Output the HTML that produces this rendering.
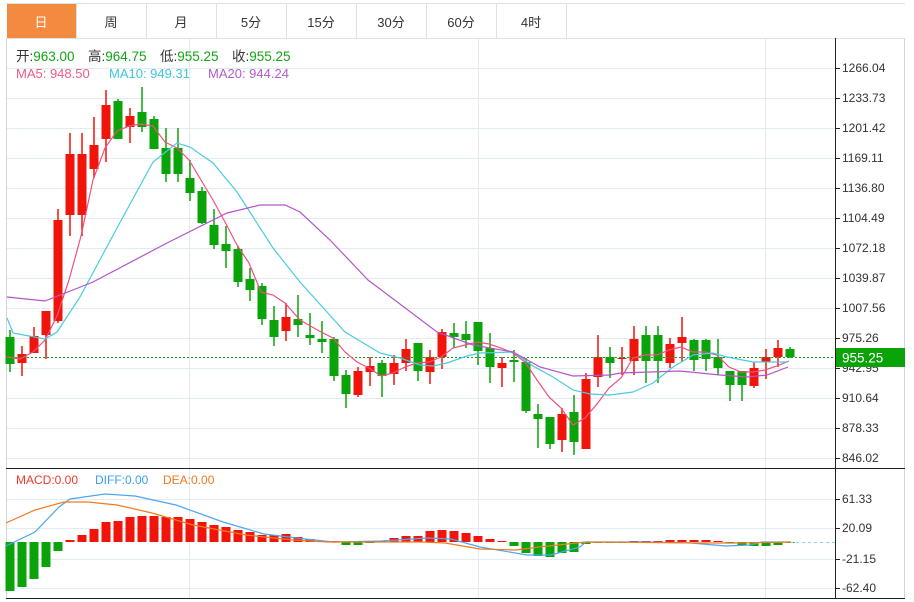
<!DOCTYPE html>
<html><head><meta charset="utf-8"><style>
html,body{margin:0;padding:0;background:#fff;width:914px;height:602px;overflow:hidden}
svg{display:block}
text{font-family:"Liberation Sans","Noto Sans CJK SC",sans-serif}
</style></head><body>
<svg id="s" width="914" height="602" xmlns="http://www.w3.org/2000/svg">
<rect x="0" y="0" width="914" height="602" fill="#fff"/>
<line x1="6" y1="3.5" x2="905" y2="3.5" stroke="#dde2e6"/>
<line x1="6" y1="38.5" x2="905" y2="38.5" stroke="#dde2e6"/>
<rect x="7" y="4" width="69" height="34" fill="#f28a3f"/>
<g stroke="#dde2e6"><line x1="146.5" y1="4" x2="146.5" y2="38"/><line x1="216.5" y1="4" x2="216.5" y2="38"/><line x1="286.5" y1="4" x2="286.5" y2="38"/><line x1="356.5" y1="4" x2="356.5" y2="38"/><line x1="426.5" y1="4" x2="426.5" y2="38"/><line x1="496.5" y1="4" x2="496.5" y2="38"/><line x1="566.5" y1="4" x2="566.5" y2="38"/><line x1="76.5" y1="4" x2="76.5" y2="38"/></g>
<g font-size="13" text-anchor="middle" fill="#333">
<text x="41" y="27" fill="#fff">日</text><text x="111" y="27">周</text><text x="181" y="27">月</text><text x="251" y="27">5分</text><text x="321" y="27">15分</text><text x="391" y="27">30分</text><text x="461" y="27">60分</text><text x="531" y="27">4时</text>
</g>
<line x1="6.5" y1="38" x2="6.5" y2="598" stroke="#cfd6dc"/>
<line x1="904.5" y1="38" x2="904.5" y2="598" stroke="#cfd6dc"/>
<g id="grid" stroke="#e3ebf2"></g>
<line x1="6" y1="468.5" x2="905" y2="468.5" stroke="#222"/>
<line x1="6" y1="598.5" x2="905" y2="598.5" stroke="#222"/>
<line x1="835.5" y1="38" x2="835.5" y2="598" stroke="#222"/>
<g id="axis" font-size="12" fill="#333"></g>
<g id="ma" fill="none" stroke-width="1.2"></g>
<g id="cd"></g>
<line x1="7" y1="357.5" x2="835" y2="357.5" stroke="#1a9a1a" stroke-dasharray="2,2"/>
<rect x="836" y="348" width="69" height="19" fill="#0aa30a"/>
<text x="842" y="362.5" font-size="13.5" fill="#fff">955.25</text>
<g font-size="13.5" fill="#333">
<text x="16" y="61">开:<tspan fill="#14a314">963.00</tspan></text>
<text x="88" y="61">高:<tspan fill="#14a314">964.75</tspan></text>
<text x="160" y="61">低:<tspan fill="#14a314">955.25</tspan></text>
<text x="232" y="61">收:<tspan fill="#14a314">955.25</tspan></text>
</g>
<g font-size="13">
<text x="16" y="78" fill="#ef5a86">MA5: 948.50</text>
<text x="109" y="78" fill="#3ec7da">MA10: 949.31</text>
<text x="208" y="78" fill="#b35cc7">MA20: 944.24</text>
</g>
<g font-size="12">
<text x="16" y="484" fill="#ef3a2a">MACD:0.00</text>
<text x="95" y="484" fill="#3b9ff0">DIFF:0.00</text>
<text x="163" y="484" fill="#f07a20">DEA:0.00</text>
</g>
<line x1="790" y1="542.5" x2="835" y2="542.5" stroke="#8fd0ee" stroke-dasharray="3,3"/>
</svg>
<script>
var NS="http://www.w3.org/2000/svg";
function el(p,t,a){var e=document.createElementNS(NS,t);for(var k in a)e.setAttribute(k,a[k]);document.getElementById(p).appendChild(e);return e;}
var ys=[68,98,128,158,188,218,248,278,308,338,368,398,428,458];
var lb=["1266.04","1233.73","1201.42","1169.11","1136.80","1104.49","1072.18","1039.87","1007.56","975.26","942.95","910.64","878.33","846.02"];
ys.forEach(function(y,i){el("grid","line",{x1:7,y1:y+.5,x2:835,y2:y+.5});el("axis","line",{x1:835,y1:y+.5,x2:840,y2:y+.5,stroke:"#222"});var t=el("axis","text",{x:842,y:y+4});t.textContent=lb[i];});
[189,478,765].forEach(function(x){el("grid","line",{x1:x+.5,y1:39,x2:x+.5,y2:598});});
var my=[499,528,559,588],ml=["61.33","20.09","-21.15","-62.40"];
my.forEach(function(y,i){el("grid","line",{x1:7,y1:y+.5,x2:835,y2:y+.5});el("axis","line",{x1:835,y1:y+.5,x2:840,y2:y+.5,stroke:"#222"});var t=el("axis","text",{x:842,y:y+4});t.textContent=ml[i];});
function pl(pts,c){el("ma","polyline",{points:pts,stroke:c});}
pl("7,357 20,359 33,352 45,340 57,316 69,280 81,236 93,180 105,148 117,131 129,126 141,124 153,126 165,142 177,148 189,160 201,180 213,200 225,222 237,245 249,263 261,292 273,295 285,303 300,320 321,332 333,338 345,352 357,362 369,368 381,376 393,373 405,367 417,363 429,362 441,357 453,348 465,345 477,342 489,344 501,348 513,353 525,362 537,380 549,397 561,408 573,425 585,418 597,404 609,388 621,378 633,358 645,355 657,355 669,350 681,347 693,352 705,352 717,355 729,367 741,372 753,372 765,370 777,366 789,361","#f0507e");
pl("7,318 13,333 45,339 57,332 80,297 117,228 153,162 177,143 190,147 213,163 237,192 273,248 300,282 345,332 380,353 400,358 420,365 433,366 447,363 467,356 480,353 513,352 533,366 553,377 573,390 590,394 610,395 633,392 653,383 673,367 693,355 713,353 727,357 753,362 773,362 788,362","#4acbe0");
pl("7,297 45,301 93,282 167,243 227,213 260,205 285,205 300,212 330,240 368,280 437,332 473,345 513,352 540,367 573,376 610,375 620,373 680,371 720,375 747,377 767,375 788,367","#b455c8");
var C=[["g",337,364,330,372],["r",354,363,346,376],["r",336,353,327,353],["r",311,335,311,359],["r",220,321,209,323],["r",154,215,133,236],["r",154,215,133,236],["r",145,169,117,178],["r",105,139,90,162],["g",101,139,99,139],["r",116,127,108,143],["g",112,127,87,132],["g",119,149,116,149],["g",148,174,128,182],["g",148,174,128,182],["g",178,193,160,201],["g",191,223,187,224],["g",225,245,209,249],["g",244,251,226,268],["g",249,282,246,287],["g",279,290,268,301],["g",286,319,283,325],["g",320,337,306,346],["r",317,331,303,341],["g",319,325,295,337],["g",335,338,313,345],["g",339,342,321,353],["g",339,376,337,381],["g",375,394,370,408],["r",371,395,367,397],["r",366,372,357,386],["g",363,376,360,397],["r",363,374,355,385],["r",349,363,339,371],["g",343,371,343,381],["r",357,372,350,384],["r",332,357,329,369],["g",333,337,323,348],["g",334,340,321,348],["g",322,351,322,365],["g",348,367,333,383],["r",363,368,357,387],["g",360,362,350,382],["g",362,411,358,413],["g",414,419,404,448],["g",417,444,417,449],["r",414,440,408,452],["g",412,442,395,455],["r",379,449,373,449],["r",357,377,335,387],["g",357,363,347,378],["r",358,359,347,375],["r",339,361,326,375],["g",335,361,326,383],["g",335,361,326,383],["r",344,363,338,368],["r",337,343,317,362],["g",340,360,339,371],["g",340,359,339,371],["g",357,368,339,375],["g",371,385,371,401],["g",371,385,371,401],["r",368,386,362,388],["r",357,362,349,379],["r",348,357,340,367],["g",349,357,347,358]];
C.forEach(function(c,i){var x=10+12*i,col=c[0]=="r"?"#f0140a":"#0aa30a";el("cd","rect",{x:x-0.75,y:c[3],width:1.5,height:c[4]-c[3],fill:col});el("cd","rect",{x:x-4.5,y:c[1],width:9,height:Math.max(1,c[2]-c[1]),fill:col});});
var M=[591,587,579,567,551,540,535,529,522,521,517,516,516,517,517,519,522,525,527,530,532,535,535,534,537,539,541,541,545,545,543,541,538,536,536,531,530,531,533,536,539,541,546,553,556,557,553,552,544,543,543,542,541,541,541,540,540,540,540,541,543,545,546,546,545,543];
M.forEach(function(v,i){var x=10+12*i,col=v<542?"#f0140a":"#0aa30a";var t=Math.min(v,542),h=Math.max(1,Math.abs(v-542));el("cd","rect",{x:x-4.5,y:t,width:9,height:h,fill:col});});
pl("6,546 35,532 59,507 70,499 105,494 135,496 176,505 223,522 264,534 305,539 334,542 381,541 428,538 451,539 480,547 527,555 551,555 580,547 586,542 644,542 691,543 726,546 750,545 762,542 791,542","#4da6f0");
pl("6,523 35,510 64,502 88,502 117,505 152,513 193,525 246,535 293,540 328,542 387,542 422,542 445,543 480,549 516,550 539,547 586,542 703,543 738,543 791,542","#f07a20");
var g=document.getElementById("ma");document.getElementById("s").appendChild(g);
</script>
</body></html>
